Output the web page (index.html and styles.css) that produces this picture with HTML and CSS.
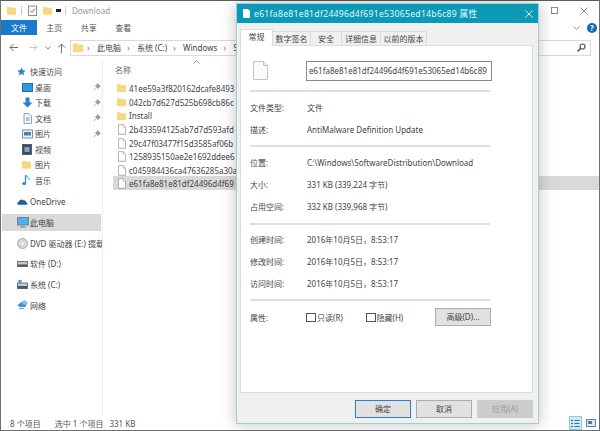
FILE: index.html
```html
<!DOCTYPE html>
<html lang="zh-CN">

<head>
    <meta charset="UTF-8">
    <title>Download</title>
    <link rel="stylesheet" href="styles.css">
</head>

<body>
    <!-- Shared icons -->
    <svg class="defs" width="0" height="0">
        <symbol id="folder" viewBox="0 0 12 11">
            <path d="M0.5 1.2h4l1 1.2h6v8.1h-11z" fill="#fbd978" stroke="#e6c168" stroke-width="0.6"/>
        </symbol>
        <symbol id="file" viewBox="0 0 10 13">
            <path d="M0.5 0.5h6l3 3v9h-9z" fill="#fff" stroke="#9a9a9a"/>
            <path d="M6.5 0.5v3h3" fill="#eee" stroke="#b5b5b5"/>
        </symbol>
        <symbol id="pin" viewBox="0 0 8 8">
            <path d="M4.6 0.6l2.8 2.8-1.2 0.5-1.2 1.7-2.6-2.6 1.7-1.2zM2.8 4.8l-2 2.4" fill="#a0a0a0" stroke="#8a8a8a" stroke-width="0.7"/>
        </symbol>
    </svg>

    <div class="explorer">
        <!-- Title bar -->
        <div class="titlebar">
            <svg class="qa-icon" width="9" height="11"><use href="#folder"/></svg>
            <span class="qa-sep"></span>
            <svg class="qa-icon" width="9" height="11" viewBox="0 0 9 11">
                <rect x="0.5" y="1" width="8" height="9.5" fill="#fff" stroke="#8f8f8f"/>
                <path d="M2 5.5l2 2 3-4" fill="none" stroke="#d0533f"/>
            </svg>
            <svg class="qa-icon" width="9" height="11"><use href="#folder"/></svg>
            <span class="qa-arrow"></span>
            <span class="qa-sep"></span>
            <span class="window-title">Download</span>
            <svg class="win-max" width="7" height="7"><rect x="0.5" y="0.5" width="6" height="6" fill="none" stroke="#8c8c8c"/></svg>
            <svg class="win-close" width="8" height="8"><path d="M0.5 0.5l7 7M7.5 0.5l-7 7" stroke="#8c8c8c"/></svg>
        </div>

        <!-- Ribbon tabs -->
        <div class="ribbon">
            <div class="ribbon-file">文件</div>
            <div class="ribbon-tab">主页</div>
            <div class="ribbon-tab">共享</div>
            <div class="ribbon-tab">查看</div>
            <svg class="ribbon-chevron" width="7" height="4"><path d="M0.5 0.5l3 3 3-3" fill="none" stroke="#9a9a9a"/></svg>
            <div class="help">?</div>
        </div>

        <!-- Address bar -->
        <div class="addressbar">
            <svg class="nav-back" width="10" height="9"><path d="M9 4.5h-8M4.5 1l-3.500 3.500 3.500 3.500" fill="none" stroke="#6d6d6d"/></svg>
            <svg class="nav-fwd" width="10" height="9"><path d="M1 4.5h8M5.500 1l3.500 3.500-3.500 3.500" fill="none" stroke="#c9c9c9"/></svg>
            <svg class="nav-down" width="6" height="4"><path d="M0.500 0.500l2.500 2.500 2.500-2.500" fill="none" stroke="#8c8c8c"/></svg>
            <svg class="nav-up" width="9" height="10"><path d="M4.500 10v-9M1 4.500l3.500-3.500 3.500 3.500" fill="none" stroke="#6d6d6d"/></svg>
            <div class="address">
                <svg class="address-folder" width="10" height="11"><use href="#folder"/></svg>
                <span class="crumb-arrow">›</span>
                <span class="crumb">此电脑</span>
                <span class="crumb-arrow">›</span>
                <span class="crumb">系统 (C:)</span>
                <span class="crumb-arrow">›</span>
                <span class="crumb">Windows</span>
                <span class="crumb-arrow">›</span>
                <span class="crumb">S</span>
                <svg class="search" width="9" height="9"><circle cx="5.500" cy="3.500" r="2.500" fill="none" stroke="#555" stroke-width="1.200"/><path d="M3.600 5.400l-3 3" stroke="#555" stroke-width="1.500"/></svg>
            </div>
        </div>

        <div class="main">
            <!-- Navigation pane -->
            <div class="sidebar">
                <div class="nav-group">
                    <div class="nav-item head">
                        <svg width="9" height="9" viewBox="0 0 10 10"><path d="M5 0.300l1.400 3.200 3.400 0.300-2.600 2.200 0.800 3.400-3-1.800-3 1.800 0.800-3.400-2.600-2.200 3.400-0.300z" fill="#2f7fd0"/></svg>
                        <span>快速访问</span>
                    </div>
                    <div class="nav-item sub">
                        <svg width="11" height="9" viewBox="0 0 11 9"><rect x="0.500" y="0.500" width="10" height="8" fill="#2b9be0" stroke="#1f6fa8"/></svg>
                        <span>桌面</span>
                        <svg class="pin" width="8" height="8"><use href="#pin"/></svg>
                    </div>
                    <div class="nav-item sub">
                        <svg width="11" height="11" viewBox="0 0 11 11"><path d="M3.500 0.500h4v5h3l-5 5-5-5h3z" fill="#2f7fd0"/></svg>
                        <span>下载</span>
                        <svg class="pin" width="8" height="8"><use href="#pin"/></svg>
                    </div>
                    <div class="nav-item sub">
                        <svg width="11" height="11" viewBox="0 0 11 11"><path d="M2 0.500h5l2.500 2.500v7.500h-7.500z" fill="#f2f5f8" stroke="#8fa3b3"/><path d="M4 5h3.500M4 7h3.500" stroke="#5b93c4"/></svg>
                        <span>文档</span>
                        <svg class="pin" width="8" height="8"><use href="#pin"/></svg>
                    </div>
                    <div class="nav-item sub">
                        <svg width="11" height="10" viewBox="0 0 11 10"><rect x="0.500" y="1" width="10" height="8" fill="#eef3f7" stroke="#7f8f9c"/><rect x="2" y="3" width="7" height="3.500" fill="#4d7fa8"/></svg>
                        <span>图片</span>
                        <svg class="pin" width="8" height="8"><use href="#pin"/></svg>
                    </div>
                    <div class="nav-item sub">
                        <svg width="10" height="11" viewBox="0 0 10 11"><rect x="0.500" y="0.500" width="9" height="10" fill="#3c4a5c" stroke="#55606e"/><rect x="2.500" y="3" width="5" height="5" fill="#7fa5c4"/></svg>
                        <span>视频</span>
                    </div>
                    <div class="nav-item sub">
                        <svg width="9" height="11"><use href="#folder"/></svg>
                        <span>图片</span>
                    </div>
                    <div class="nav-item sub">
                        <svg width="9" height="12" viewBox="0 0 9 12"><path d="M3.500 1v8" stroke="#2a86d8" stroke-width="1.200"/><path d="M3.500 1c0.500 2 3.500 2 4 4.500" fill="none" stroke="#2a86d8"/><ellipse cx="2.200" cy="9.500" rx="2" ry="1.600" fill="#2a86d8"/></svg>
                        <span>音乐</span>
                    </div>
                </div>
                <div class="nav-item head">
                    <svg width="11" height="7" viewBox="0 0 11 7"><path d="M1 6.800c-1.300-1-0.800-3 0.800-3 0.400-2 3-3.200 4.600-1.500 1.800-0.300 2.800 1 2.700 2 1.500 0.200 1.800 2 0.700 2.500z" fill="#1c5fa8"/></svg>
                    <span>OneDrive</span>
                </div>
                <div class="nav-item head selected">
                    <svg width="12" height="11" viewBox="0 0 12 11"><rect x="0.500" y="0.500" width="11" height="7.500" fill="#4db0ec" stroke="#6f8594"/><path d="M3 10h6M6 8v2" stroke="#8ea0ad" stroke-width="1.300"/></svg>
                    <span>此电脑</span>
                </div>
                <div class="nav-item head">
                    <svg width="11" height="11" viewBox="0 0 11 11"><circle cx="5.500" cy="5.500" r="5" fill="#d5d8da" stroke="#a9adb0"/><circle cx="5.500" cy="5.500" r="1.300" fill="#fff"/></svg>
                    <span>DVD 驱动器 (E:) 掇载</span>
                </div>
                <div class="nav-item head">
                    <svg width="11" height="6" viewBox="0 0 11 6"><rect x="0.500" y="0.500" width="10" height="5" fill="#c4c8cb" stroke="#6f7478"/><rect x="1" y="3.500" width="9" height="2" fill="#50565b"/></svg>
                    <span>软件 (D:)</span>
                </div>
                <div class="nav-item head">
                    <svg width="11" height="9" viewBox="0 0 11 9"><rect x="0.500" y="3" width="10" height="5.500" fill="#c4c8cb" stroke="#6f7478"/><rect x="1" y="6" width="9" height="2.500" fill="#50565b"/><rect x="1.500" y="0" width="3" height="3" fill="#2f9bdc"/></svg>
                    <span>系统 (C:)</span>
                </div>
                <div class="nav-item head">
                    <svg width="11" height="10" viewBox="0 0 11 10"><path d="M0.500 5l4-3h6l-2 5h-6z" fill="#3d93d8"/><circle cx="7.500" cy="2.500" r="2.200" fill="#7cc0ec"/><path d="M2 8.500h5" stroke="#7f9fb8"/></svg>
                    <span>网络</span>
                </div>
            </div>

            <!-- File list -->
            <div class="filelist">
                <svg class="sort" width="7" height="4"><path d="M0.500 3.500l3-3 3 3" fill="none" stroke="#9a9a9a"/></svg>
                <div class="col-head">名称</div>
                <div class="file-row"><svg width="9" height="10"><use href="#folder"/></svg><span>41ee59a3f820162dcafe8493</span></div>
                <div class="file-row"><svg width="9" height="10"><use href="#folder"/></svg><span>042cb7d627d525b698cb86c</span></div>
                <div class="file-row"><svg width="9" height="10"><use href="#folder"/></svg><span>Install</span></div>
                <div class="file-row"><svg class="file-icon" width="8" height="11"><use href="#file"/></svg><span>2b433594125ab7d7d593afd</span></div>
                <div class="file-row"><svg class="file-icon" width="8" height="11"><use href="#file"/></svg><span>29c47f03477f15d3585af06b</span></div>
                <div class="file-row"><svg class="file-icon" width="8" height="11"><use href="#file"/></svg><span>1258935150ae2e1692ddee6</span></div>
                <div class="file-row"><svg class="file-icon" width="8" height="11"><use href="#file"/></svg><span>c045984436ca47636285a30a</span></div>
                <div class="file-row selected"><svg class="file-icon" width="8" height="11"><use href="#file"/></svg><span>e61fa8e81e81df24496d4f69</span></div>
            </div>
        </div>

        <!-- Status bar -->
        <div class="statusbar">
            <span class="status-count">8 个项目</span>
            <span class="status-sel">选中 1 个项目</span>
            <span>331 KB</span>
            <div class="view-buttons">
                <div class="view-btn active">
                    <svg width="9" height="9"><path d="M0 1.500h2M0 4.500h2M0 7.500h2M3.500 1.500h5M3.500 4.500h5M3.500 7.500h5" stroke="#3a6d92"/></svg>
                </div>
                <div class="view-btn">
                    <svg width="10" height="8"><rect x="0.500" y="0.500" width="9" height="7" fill="#dfe7ee" stroke="#6d8296"/><rect x="2" y="2" width="4" height="3" fill="#4a78a0"/></svg>
                </div>
            </div>
        </div>
    </div>

    <!-- Properties dialog -->
    <div class="dialog">
        <div class="dialog-title">
            <svg width="7" height="9"><path d="M0 0h5l2 2v7h-7z" fill="#fff"/></svg>
            <span class="dialog-title-text">e61fa8e81e81df24496d4f691e53065ed14b6c89 属性</span>
            <svg class="dialog-close" width="8" height="8"><path d="M0.500 0.500l7 7M7.500 0.500l-7 7" stroke="#fff"/></svg>
        </div>
        <div class="tabs">
            <div class="tab active">常规</div>
            <div class="tab t2">数字签名</div>
            <div class="tab t3">安全</div>
            <div class="tab t4">详细信息</div>
            <div class="tab t5">以前的版本</div>
        </div>
        <div class="panel">
            <div class="name-row">
                <svg width="15" height="19" viewBox="0 0 15 19"><path d="M0.500 0.500h10l4 4v14h-14z" fill="#fafafa" stroke="#c4c4c4"/><path d="M10.500 0.500v4h4" fill="#e8e8e8" stroke="#c4c4c4"/></svg>
                <div class="name-input">e61fa8e81e81df24496d4f691e53065ed14b6c89</div>
            </div>
            <hr>
            <div class="prop-group g1">
                <div class="prop"><span class="prop-label">文件类型:</span><span>文件</span></div>
                <div class="prop"><span class="prop-label">描述:</span><span>AntiMalware Definition Update</span></div>
            </div>
            <hr>
            <div class="prop-group g2">
                <div class="prop"><span class="prop-label">位置:</span><span>C:\Windows\SoftwareDistribution\Download</span></div>
                <div class="prop"><span class="prop-label">大小:</span><span>331 KB (339,224 字节)</span></div>
                <div class="prop"><span class="prop-label">占用空间:</span><span>332 KB (339,968 字节)</span></div>
            </div>
            <hr>
            <div class="prop-group g3">
                <div class="prop"><span class="prop-label">创建时间:</span><span>2016年10月5日，8:53:17</span></div>
                <div class="prop"><span class="prop-label">修改时间:</span><span>2016年10月5日，8:53:17</span></div>
                <div class="prop"><span class="prop-label">访问时间:</span><span>2016年10月5日，8:53:17</span></div>
            </div>
            <hr>
            <div class="attr-row">
                <span class="prop-label">属性:</span>
                <span class="check"><i></i>只读(R)</span>
                <span class="check"><i></i>隐藏(H)</span>
                <span class="btn btn-adv">高级(D)...</span>
            </div>
        </div>
        <div class="dialog-buttons">
            <span class="btn default">确定</span>
            <span class="btn">取消</span>
            <span class="btn disabled">应用(A)</span>
        </div>
    </div>
</body>

</html>
```

FILE: styles.css
```css
html, body {
    margin: 0;
    height: 100%;
}

body {
    position: relative;
    width: 600px;
    height: 431px;
    overflow: hidden;
    background-color: #fff;
    color: #444;
    font-family: "Noto Sans", "Noto Sans CJK SC", sans-serif;
    font-size: 8px;
}

.defs {
    position: absolute;
}

svg {
    flex: none;
    display: block;
}

/* Explorer window */
.explorer {
    box-sizing: border-box;
    display: flex;
    flex-direction: column;
    width: 600px;
    height: 431px;
    border: 1px solid #6f6f6f;
    border-top-color: #5c5c5c;
}

.titlebar {
    display: flex;
    align-items: center;
    height: 19px;
    padding-left: 6px;
}

.qa-icon {
    margin-right: 6px;
}

.qa-icon:first-child {
    margin-right: 5px;
}

.qa-sep {
    width: 1px;
    height: 9px;
    margin-right: 6px;
    background-color: #c8c8c8;
}

.qa-arrow {
    box-sizing: border-box;
    width: 5px;
    height: 3px;
    margin: 0 4px 0 -2px;
    border-top: 1px solid #222;
    border-bottom: 2px solid #222;
}

.window-title {
    color: #9a9a9a;
    font-size: 8px;
}

.win-max {
    margin-left: auto;
}

.win-close {
    margin: 0 11px 0 22px;
}

.ribbon {
    display: flex;
    align-items: center;
    height: 15px;
    color: #555;
}

.ribbon-file {
    width: 36px;
    line-height: 15px;
    text-align: center;
    background-color: #1979ca;
    color: #fff;
}

.ribbon-tab {
    width: 34.500px;
    text-align: center;
}

.ribbon-chevron {
    margin-left: auto;
}

.help {
    width: 10px;
    height: 10px;
    margin: 0 2px 0 7px;
    border-radius: 50%;
    background-color: #1566b8;
    color: #fff;
    font-size: 8px;
    font-weight: bold;
    line-height: 10px;
    text-align: center;
}

.addressbar {
    display: flex;
    align-items: center;
    height: 25px;
    padding-left: 8px;
}

.nav-back {
    margin-right: 9px;
}

.nav-fwd {
    margin-right: 7px;
}

.nav-down {
    margin-right: 6px;
}

.nav-up {
    margin-right: 4px;
}

.address {
    box-sizing: border-box;
    display: flex;
    flex: 1;
    align-items: center;
    height: 16px;
    margin-right: 8px;
    padding-left: 2px;
    border: 1px solid #dadada;
    color: #444;
    white-space: nowrap;
}

.address-folder {
    margin-right: 4px;
}

.crumb-arrow {
    width: 10px;
    color: #777;
    font-size: 9px;
}

.crumb {
    margin-right: 6px;
}

.search {
    margin-left: auto;
    margin-right: 4px;
}

.main {
    display: flex;
    flex: 1;
    min-height: 0;
}

/* Navigation pane */
.sidebar {
    box-sizing: border-box;
    width: 102px;
    padding-top: 4px;
    border-right: 1px solid #eeeeee;
}

.nav-group {
    margin-bottom: 5.500px;
}

.nav-item {
    position: relative;
    display: flex;
    align-items: center;
    height: 15.500px;
    white-space: nowrap;
    overflow: hidden;
}

.sidebar > .nav-item {
    height: 16.500px;
    margin-bottom: 4.200px;
}

.nav-item.head {
    padding-left: 16px;
}

.nav-item.head span {
    position: absolute;
    left: 29px;
}

.nav-item.sub {
    padding-left: 21px;
}

.nav-item.sub span {
    position: absolute;
    left: 34px;
}

.nav-item .pin {
    position: absolute;
    left: 92px;
}

.nav-item.selected {
    margin-left: 1px;
    margin-right: 1px;
    padding-left: 15px;
    background-color: #d9d9d9;
}

.nav-item.selected span {
    left: 28px;
}

/* File list */
.filelist {
    position: relative;
    flex: 1;
    padding: 3px 0 0 10px;
}

.sort {
    position: absolute;
    left: 90px;
    top: 0;
}

.col-head {
    height: 18.500px;
    padding-left: 2px;
    line-height: 13px;
    color: #666;
}

.file-row {
    display: flex;
    align-items: center;
    gap: 3px;
    height: 13.700px;
    padding-left: 4px;
    white-space: nowrap;
}

.file-icon {
    margin-left: 1px;
}

.file-row.selected {
    height: 14px;
    margin-top: -1px;
    background-color: #d9d9d9;
}

.statusbar {
    display: flex;
    align-items: center;
    height: 14px;
    padding-left: 9px;
    color: #555;
}

.status-count {
    margin-right: 14px;
}

.status-sel {
    margin-right: 6px;
}

.view-buttons {
    display: flex;
    gap: 2px;
    margin-left: auto;
    margin-right: 2px;
}

.view-btn {
    display: flex;
    align-items: center;
    justify-content: center;
    width: 13px;
    height: 14px;
}

.view-btn.active {
    box-sizing: border-box;
    border: 1px solid #8fc8ec;
    background-color: #cde8f8;
}

/* Properties dialog sits over the explorer window */
.dialog {
    position: absolute;
    left: 236px;
    top: 3px;
    box-sizing: border-box;
    width: 303px;
    height: 421px;
    border: 1px solid #a3ced6;
    background-color: #f0f0f0;
    box-shadow: 0 0 14px rgba(0, 0, 0, 0.25);
}

.dialog-title {
    display: flex;
    align-items: center;
    height: 19px;
    padding-left: 6px;
    background-color: #0a9ab8;
    color: #e8f6fa;
    font-size: 8.600px;
    letter-spacing: 0.300px;
}

.dialog-title-text {
    margin-left: 4px;
}

.dialog-close {
    margin-left: auto;
    margin-right: 5px;
}

.tabs {
    display: flex;
    align-items: flex-end;
    height: 22px;
    padding-left: 3px;
}

.tab {
    box-sizing: border-box;
    height: 14px;
    border: 1px solid #dcdcdc;
    border-left: none;
    border-bottom: none;
    background-color: #f0f0f0;
    color: #444;
    line-height: 13px;
    text-align: center;
}

.tab.active {
    position: relative;
    width: 33px;
    height: 17px;
    margin-bottom: -1px;
    border-left: 1px solid #d9d9d9;
    background-color: #fff;
    line-height: 14px;
}

.t2 {
    width: 38px;
}

.t3 {
    width: 31px;
}

.t4 {
    width: 39px;
}

.t5 {
    width: 46px;
}

.panel {
    box-sizing: border-box;
    width: 293px;
    height: 348px;
    margin-left: 3px;
    padding: 15px 41px 0 9px;
    border: 1px solid #dcdcdc;
    background-color: #fff;
    color: #444;
}

.name-row {
    display: flex;
    align-items: center;
    gap: 38px;
    height: 19px;
    padding-left: 3px;
}

.name-input {
    box-sizing: border-box;
    flex: none;
    width: 186px;
    height: 20px;
    padding-left: 2px;
    border: 1px solid #8a8a8a;
    line-height: 18px;
    white-space: nowrap;
}

.panel hr {
    height: 2px;
    margin: 0 1px 0 0;
    border: none;
    background-color: #dedede;
}

.name-row + hr {
    margin-top: 10px;
}

.prop-group {
    padding: 4px 0 5px 0;
}

.g2 {
    padding-bottom: 6px;
}

.g3 {
    padding-top: 3px;
}

.prop {
    display: flex;
    align-items: center;
    height: 22px;
    white-space: nowrap;
}

.prop-label {
    flex: none;
    width: 57px;
}

.attr-row {
    display: flex;
    align-items: center;
    height: 18px;
    margin-top: 7px;
    white-space: nowrap;
}

.attr-row .prop-label {
    width: 56px;
}

.check {
    display: flex;
    align-items: center;
    gap: 1px;
    width: 60px;
}

.check i {
    box-sizing: border-box;
    width: 10px;
    height: 9px;
    border: 1px solid #555;
}

.btn {
    box-sizing: border-box;
    display: inline-block;
    width: 56px;
    height: 18px;
    border: 1px solid #adadad;
    background-color: #e1e1e1;
    line-height: 16px;
    text-align: center;
}

.btn-adv {
    flex: none;
    margin-left: 10px;
}

.dialog-buttons {
    display: flex;
    justify-content: flex-end;
    gap: 5px;
    padding: 7px 5px 0 0;
}

.btn.default {
    border: 1px solid #2a7fc8;
}

.btn.disabled {
    border-color: #cccccc;
    background-color: #cccccc;
    color: #999;
}
```
